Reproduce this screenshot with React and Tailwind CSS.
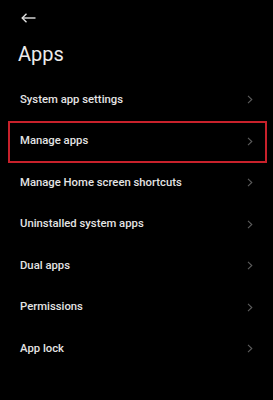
import React from "react";

const items = [
  "System app settings",
  "Manage apps",
  "Manage Home screen shortcuts",
  "Uninstalled system apps",
  "Dual apps",
  "Permissions",
  "App lock",
];

function Chevron() {
  return (
    <svg width="6" height="9" viewBox="0 0 6 9" fill="none">
      <path d="M1 0.8L4.8 4.5L1 8.2" stroke="#5c5c5c" strokeWidth="1.1" />
    </svg>
  );
}

export default function App() {
  return (
    <div
      className="w-[273px] h-[400px] bg-black overflow-hidden"
      style={{ fontFamily: "Roboto, 'Noto Sans', sans-serif" }}
    >
      <div className="pt-[13px] pl-[21px]">
        <svg width="15" height="10" viewBox="0 0 15 10" fill="none" className="block">
          <path d="M14.5 5H1.5" stroke="#e0e0e0" strokeWidth="1.4" />
          <path d="M5.5 0.8L1.2 5L5.5 9.2" stroke="#e0e0e0" strokeWidth="1.4" />
        </svg>
      </div>
      <div className="mt-[19px] pl-[18px] text-[20px] leading-[24px] text-[#ececec] font-normal">
        Apps
      </div>
      <div className="mt-[13px] flex flex-col">
        {items.map((t, i) => (
          <div
            key={t}
            className="relative h-[41.5px] flex items-center justify-between pl-[20px] pr-[20px]"
          >
            <span className="text-[11.3px] leading-[14px] font-medium text-[#e4e4e4]">{t}</span>
            <Chevron />
            {i === 1 && (
              <div className="absolute left-[7.5px] right-[6.5px] top-[0.5px] h-[42px] border-2 border-[#c8212b]" />
            )}
          </div>
        ))}
      </div>
    </div>
  );
}
